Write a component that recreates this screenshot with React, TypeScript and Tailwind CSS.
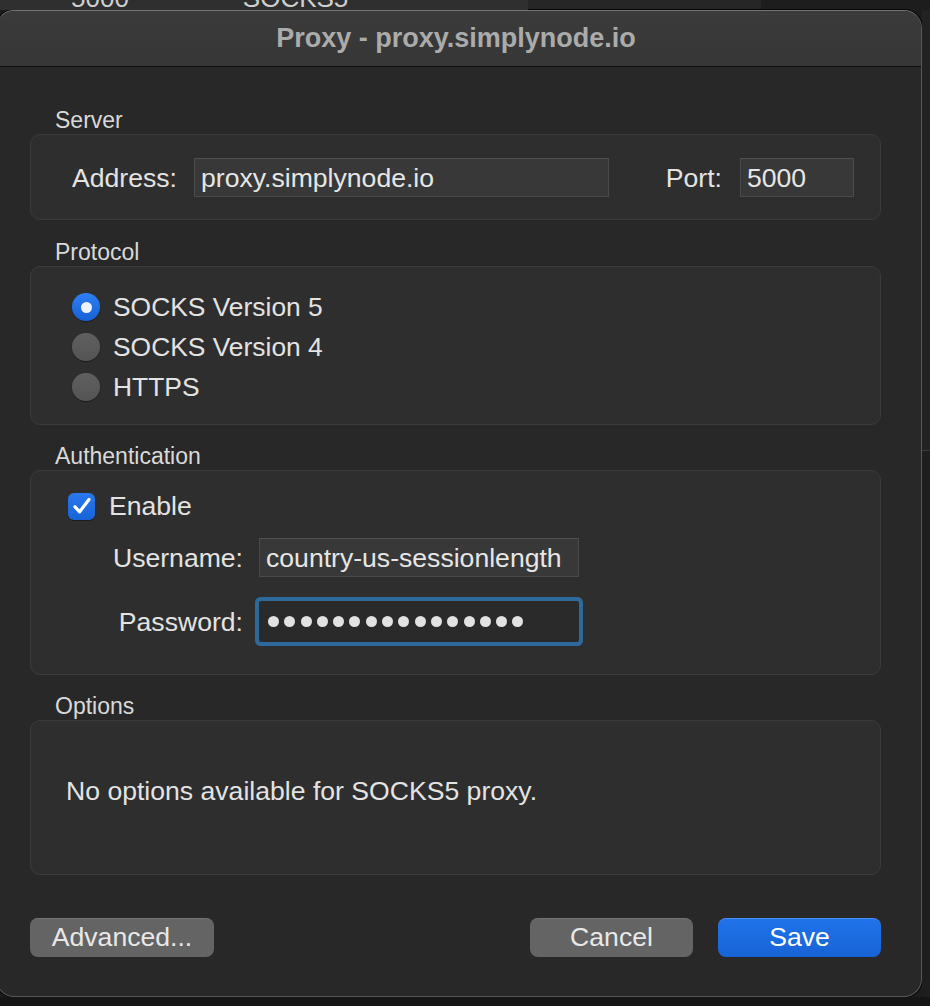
import React from "react";

const font = { fontFamily: '"Liberation Sans", Arial, sans-serif' };

function SectionLabel({ children }: { children: React.ReactNode }) {
  return (
    <div className="h-[24px] leading-[24px] text-[23px] text-[#d9d9d9] pl-[25px] mb-[2px]">
      {children}
    </div>
  );
}

function Radio({ checked, label }: { checked?: boolean; label: string }) {
  return (
    <div className="flex items-center h-[40px] pl-[41px]">
      {checked ? (
        <div className="w-[28px] h-[28px] rounded-full bg-gradient-to-b from-[#2f7ff2] to-[#1561d6] flex items-center justify-center shadow-[0_1px_1px_rgba(0,0,0,0.4)]">
          <div className="w-[11px] h-[11px] rounded-full bg-[#eef3fd]" />
        </div>
      ) : (
        <div className="w-[28px] h-[28px] rounded-full bg-gradient-to-b from-[#606060] to-[#545454] shadow-[0_1px_1px_rgba(0,0,0,0.4)]" />
      )}
      <span className="ml-[13px] text-[26.4px] text-[#e3e3e3] leading-[30px]">{label}</span>
    </div>
  );
}

export default function App() {
  return (
    <div style={font} className="w-[930px] h-[1006px] bg-[#1c1c1c] flex flex-col overflow-hidden">
      {/* background app strip */}
      <div className="h-[10px] flex overflow-hidden shrink-0">
        <div className="w-[528px] bg-[#2f2f2f] relative">
          <div className="flex -mt-[15px] text-[26px] leading-[26px] text-[#cfcfcf]">
            <span className="ml-[71px]">5000</span>
            <span className="ml-[114px]">SOCKS5</span>
          </div>
        </div>
        <div className="w-[233px] bg-[#262626]" />
        <div className="flex-1 bg-[#1d1d1d]" />
      </div>

      <div className="flex shrink-0">
        {/* window */}
        <div className="-ml-[4px] w-[926px] rounded-[18px] border border-[#575757] border-t-[#747474] bg-[#282828] overflow-hidden shadow-[0_0_0_1px_#050505]">
          <div className="h-[56px] bg-gradient-to-b from-[#3b3b3b] to-[#363636] border-b border-[#0e0e0e] flex items-center justify-center">
            <span className="text-[27px] font-bold text-[#ababab] ml-[-6px]">Proxy - proxy.simplynode.io</span>
          </div>

          <div className="pl-[33px] pt-[41px] pb-[39px]">
            {/* Server */}
            <SectionLabel>Server</SectionLabel>
            <div className="w-[851px] h-[86px] rounded-[10px] border border-[#3b3b3b] bg-[#2e2e2e] flex items-center pl-[41px] pr-[26px]">
              <div className="w-[122px] pt-[4px] text-[26.6px] text-[#e3e3e3]">Address:</div>
              <div className="w-[415px] h-[39px] pt-[3px] bg-[#383838] border border-[#4a4a4a] border-t-[#505050] flex items-center pl-[6px] text-[26.6px] text-[#e6e6e6]">
                proxy.simplynode.io
              </div>
              <div className="flex-1" />
              <div className="pt-[4px] text-[26.6px] text-[#e3e3e3] mr-[18px]">Port:</div>
              <div className="w-[114px] h-[39px] pt-[3px] bg-[#383838] border border-[#4a4a4a] border-t-[#505050] flex items-center pl-[6px] text-[26.6px] text-[#e6e6e6]">
                5000
              </div>
            </div>

            {/* Protocol */}
            <div className="mt-[20px]">
              <SectionLabel>Protocol</SectionLabel>
            </div>
            <div className="w-[851px] h-[159px] rounded-[10px] border border-[#3b3b3b] bg-[#2e2e2e] pt-[20px]">
              <Radio checked label="SOCKS Version 5" />
              <Radio label="SOCKS Version 4" />
              <Radio label="HTTPS" />
            </div>

            {/* Authentication */}
            <div className="mt-[19px]">
              <SectionLabel>Authentication</SectionLabel>
            </div>
            <div className="w-[851px] h-[205px] rounded-[10px] border border-[#3b3b3b] bg-[#2e2e2e] pt-[21px]">
              <div className="flex items-center h-[28px] pl-[37px]">
                <div className="w-[27px] h-[27px] rounded-[6px] bg-gradient-to-b from-[#2a78ee] to-[#1763d8] flex items-center justify-center shadow-[0_1px_1px_rgba(0,0,0,0.4)]">
                  <svg width="24" height="24" viewBox="0 0 24 24" fill="none">
                    <path d="M5 12.8l4.6 5L19 5.5" stroke="#ffffff" strokeWidth="3.2" strokeLinecap="round" strokeLinejoin="round" />
                  </svg>
                </div>
                <span className="ml-[14px] pt-[2px] text-[26.6px] text-[#e3e3e3]">Enable</span>
              </div>
              <div className="flex items-center mt-[18px] h-[39px]">
                <div className="w-[212px] pt-[3px] text-right text-[26.6px] text-[#e3e3e3]">Username:</div>
                <div className="ml-[16px] w-[320px] h-[39px] pt-[3px] bg-[#383838] border border-[#4a4a4a] border-t-[#505050] flex items-center pl-[6px] text-[26.6px] text-[#e6e6e6] overflow-hidden whitespace-nowrap">
                  country-us-sessionlength
                </div>
              </div>
              <div className="flex items-center mt-[24px] h-[41px]">
                <div className="w-[212px] pt-[3px] text-right text-[26.6px] text-[#e3e3e3]">Password:</div>
                <div className="ml-[16px] w-[320px] h-[41px] bg-[#2a2a2a] rounded-[2px] shadow-[0_0_0_4px_#2d699a] flex items-center pl-[9px] gap-[5.3px]">
                  {Array.from({ length: 16 }).map((_, i) => (
                    <div key={i} className="w-[11px] h-[11px] rounded-full bg-[#e2e2e2]" />
                  ))}
                </div>
              </div>
            </div>

            {/* Options */}
            <div className="mt-[19px]">
              <SectionLabel>Options</SectionLabel>
            </div>
            <div className="w-[851px] h-[155px] rounded-[10px] border border-[#3b3b3b] bg-[#2e2e2e] pt-[55px] pl-[35px]">
              <div className="text-[26.6px] leading-[30px] text-[#e3e3e3]">No options available for SOCKS5 proxy.</div>
            </div>

            {/* Buttons */}
            <div className="mt-[43px] w-[851px] flex items-center">
              <div className="w-[184px] h-[39px] rounded-[8px] bg-[#646464] border-t border-[#737373] flex items-center justify-center text-[26.6px] text-[#e8e8e8]">
                Advanced...
              </div>
              <div className="flex-1" />
              <div className="w-[163px] h-[39px] rounded-[8px] bg-[#646464] border-t border-[#737373] flex items-center justify-center text-[26.6px] text-[#e8e8e8]">
                Cancel
              </div>
              <div className="ml-[25px] w-[163px] h-[39px] rounded-[8px] bg-gradient-to-b from-[#2073ea] to-[#1763d6] border-t border-[#4a8ef0] flex items-center justify-center text-[26.6px] text-white">
                Save
              </div>
            </div>
          </div>
        </div>
        {/* background right strip */}
        <div className="flex-1 flex flex-col bg-[#1e1e1e]">
          <div className="h-[440px] bg-[#222222]" />
          <div className="h-[1px] bg-[#3a3a3a]" />
          <div className="flex-1" />
        </div>
      </div>
      <div className="flex-1 bg-[#151515]" />
    </div>
  );
}
